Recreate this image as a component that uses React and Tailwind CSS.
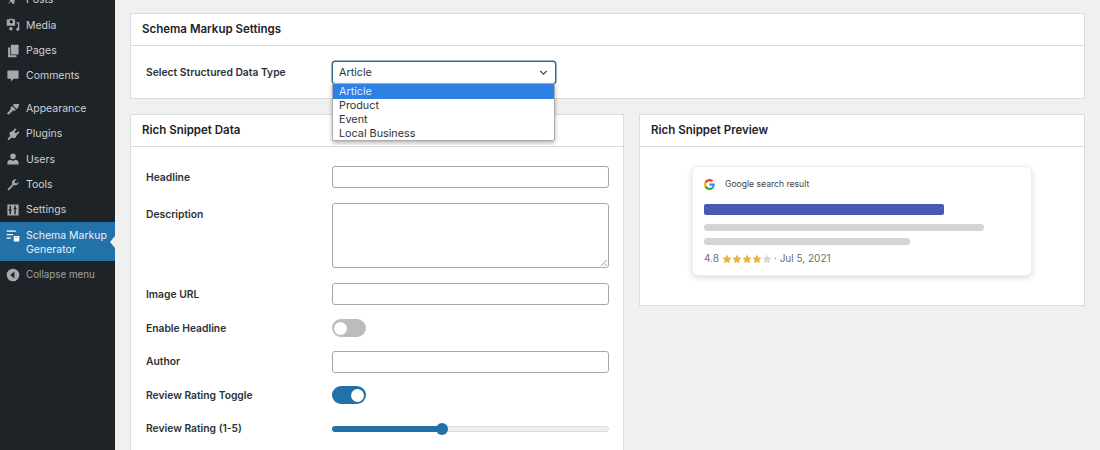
import React from "react";

const ic = "w-[14px] h-[14px] shrink-0 fill-[#a7aaad]";
const icons = {
  Posts: <svg viewBox="0 0 20 20" className={ic}><path d="M12 2l6 6-2 1-1-1-3 3 0 4-2 1-3-4-5 5 4-6-3-3 1-2 4 0 3-3-1-1z" /></svg>,
  Media: <svg viewBox="0 0 20 20" className={ic}><path d="M1 2h3l1-1h5l1 1h2v9H1zm4 3.500a2.500 2.500 0 1 0 5 0 2.500 2.500 0 0 0-5 0zM15 6h4v10a2.200 2.200 0 1 1-2-2V8h-2zM7 13a2.500 2.500 0 1 1 0 5 2.500 2.500 0 0 1 0-5z" fillRule="evenodd" /></svg>,
  Pages: <svg viewBox="0 0 20 20" className={ic}><path d="M7 1h11v14H7zM3 5h3v11h9v3H3z" /></svg>,
  Comments: <svg viewBox="0 0 20 20" className={ic}><path d="M3 2h14a1 1 0 0 1 1 1v10a1 1 0 0 1-1 1h-6l-4 4v-4H3a1 1 0 0 1-1-1V3a1 1 0 0 1 1-1z" /></svg>,
  Appearance: <svg viewBox="0 0 20 20" className={ic}><path d="M19 3l-2 6-2 1-5-5 1-2zM9 6l5 5-2 2-2-1-6 6-3-1 6-7-1-2z" /></svg>,
  Plugins: <svg viewBox="0 0 20 20" className={ic}><path d="M13 2l2 1-3 4 2 2 4-3 1 2-4 4-1 3-3 1-3-1-4 4-2-2 4-4-1-3 1-3 3-1z" /></svg>,
  Users: <svg viewBox="0 0 20 20" className={ic}><path d="M10 2a4 4 0 1 1 0 8 4 4 0 0 1 0-8zM2 18v-3c0-3 3-4 5-4l3 2 3-2c2 0 5 1 5 4v3z" /></svg>,
  Tools: <svg viewBox="0 0 20 20" className={ic}><path d="M18 5a5 5 0 0 1-7 5l-7 8-2-2 7-7a5 5 0 0 1 6-7l-3 3 1 2 2 1z" /></svg>,
  Settings: <svg viewBox="0 0 20 20" className={ic}><path d="M2 2h16v16H2zm3 2v5H4v2h1v5h2v-5h1V9H7V4zm7 0v3h-1v2h1v7h2V9h1V7h-1V4z" fillRule="evenodd" /></svg>,
  Schema: <svg viewBox="0 0 20 20" className="w-[14px] h-[14px] shrink-0 fill-white"><path d="M1 2h13v2H1zM1 7h9v2H1zM1 12h6v2H1zM11 10h8v8h-8zm2 2v1h4v-1z" fillRule="evenodd" /></svg>,
};

function Item({ name }) {
  return (
    <div className="h-[25.3px] flex items-center gap-[6px] pl-[6px] text-[10.500px] text-[#cfd2d4]">
      {icons[name]}
      <span>{name}</span>
    </div>
  );
}

function Sidebar() {
  return (
    <aside className="w-[115px] shrink-0 h-[450px] bg-[#1d2327] overflow-hidden">
      <div className="-mt-[12.500px] flex flex-col">
        <Item name="Posts" />
        <Item name="Media" />
        <Item name="Pages" />
        <Item name="Comments" />
        <div className="h-[7.500px]" />
        <Item name="Appearance" />
        <Item name="Plugins" />
        <Item name="Users" />
        <Item name="Tools" />
        <Item name="Settings" />
        <div className="relative -mt-[0.500px] h-[39px] bg-[#2271a8] flex gap-[6px] pl-[6px] pt-[7px] text-[10.500px] leading-[14px] text-[#e8f2f8]">
          {icons.Schema}
          <span className="whitespace-nowrap">Schema Markup<br />Generator</span>
          <div className="absolute right-0 top-[14px] w-0 h-0 border-y-[6px] border-y-transparent border-r-[5px] border-r-[#f0f0f1]" />
        </div>
        <div className="h-[28px] flex items-center gap-[6px] pl-[6px] text-[9.800px] text-[#a0a3a6]">
          <svg viewBox="0 0 20 20" className={ic}><path d="M10 1a9 9 0 1 1 0 18 9 9 0 0 1 0-18zm2 4l-6 5 6 5z" fillRule="evenodd" /></svg>
          <span>Collapse menu</span>
        </div>
      </div>
    </aside>
  );
}

function Card({ title, className = "", children }) {
  return (
    <section className={`bg-white border border-[#dcdcde] ${className}`}>
      <h2 className="h-[32px] flex items-center px-[11px] border-b border-[#dcdcde] text-[11.500px] font-semibold text-[#1d2327]">{title}</h2>
      {children}
    </section>
  );
}

function Row({ label, children, h, mb, top = false, lift = 1 }) {
  return (
    <div className={`flex pl-[15px] ${top ? "items-start" : "items-center"}`} style={{ height: h, marginBottom: mb }}>
      <label className="w-[186px] shrink-0 text-[10.300px] font-semibold text-[#2c3338]" style={{ paddingTop: top ? 4 : lift }}>{label}</label>
      {children}
    </div>
  );
}

const inputCls = "w-[277px] h-full bg-white border border-[#a4a6a8] rounded-[3px] block";

function Toggle({ on }) {
  return (
    <div className={`w-[34px] h-[18px] rounded-full flex items-center px-[2px] ${on ? "bg-[#2271a8] justify-end" : "bg-[#bcbcbc] justify-start"}`}>
      <div className="w-[13px] h-[13px] rounded-full bg-white" />
    </div>
  );
}

function Star({ on }) {
  return (
    <svg viewBox="0 0 20 20" className={`w-[10px] h-[10px] ${on ? "fill-[#e9b23c]" : "fill-[#d6d6d6]"}`}>
      <path d="M10 1l2.800 5.800 6.200.9-4.500 4.400 1.100 6.300L10 15.400l-5.600 3 1.100-6.300L1 7.700l6.200-.9z" />
    </svg>
  );
}

export default function App() {
  return (
    <div className="w-[1100px] h-[450px] overflow-hidden flex bg-[#f0f0f1] font-['Inter','Liberation_Sans',sans-serif]">
      <Sidebar />
      <main className="flex-1 min-w-0 pt-[13px] pl-[15px] pr-[15px] flex flex-col gap-[15px]">
        <Card title="Schema Markup Settings" className="h-[86px] shrink-0">
          <div className="flex items-start pl-[15px] pt-[15px]">
            <label className="w-[186px] shrink-0 text-[10.300px] font-semibold text-[#2c3338] leading-[22px]">Select Structured Data Type</label>
            <div className="relative w-[224px]">
              <div className="h-[23px] border border-[#2b6f8f] shadow-[0_0_0_0.5px_#2b6f8f] rounded-[3px] bg-white flex items-center justify-between pl-[6px] pr-[5px] text-[10.800px] text-[#2c3338]">
                <span className="pt-px">Article</span>
                <svg viewBox="0 0 20 20" className="w-[13px] h-[13px] fill-none stroke-[#3c434a] stroke-2"><path d="M5 7.500l5 5 5-5" /></svg>
              </div>
              <div className="absolute left-0 top-[22px] w-[223px] h-[58px] bg-white border border-[#a9abad] shadow-[0_2px_4px_rgba(0,0,0,0.3)] rounded-b-[2px] text-[10.800px] leading-[14px] text-[#2c3338]">
                <div className="bg-[#2f80e4] text-[#dbeeff] pl-[6px] h-[15px] leading-[15px]">Article</div>
                <div className="pl-[6px]">Product</div>
                <div className="pl-[6px]">Event</div>
                <div className="pl-[6px]">Local Business</div>
              </div>
            </div>
          </div>
        </Card>
        <div className="flex items-start gap-[15px]">
          <Card title="Rich Snippet Data" className="w-[494px] h-[400px] shrink-0">
            <div className="pt-[19px]">
              <Row label="Headline" h={22} mb={15}><div className={inputCls} /></Row>
              <Row label="Description" h={65} mb={15} top>
                <div className={`${inputCls} relative`}>
                  <svg viewBox="0 0 8 8" className="absolute right-px bottom-px w-[7px] h-[7px] stroke-[#8a8a8a] fill-none"><path d="M1 8L8 1M5 8L8 5" /></svg>
                </div>
              </Row>
              <Row label="Image URL" h={22} mb={14}><div className={inputCls} /></Row>
              <Row label="Enable Headline" h={18} mb={14}><Toggle /></Row>
              <Row label="Author" h={22} mb={13} lift={0}><div className={inputCls} /></Row>
              <Row label="Review Rating Toggle" h={18} mb={14}><Toggle on /></Row>
              <Row label="Review Rating (1-5)" h={18} mb={0} lift={4}>
                <div className="relative w-[277px] h-[6px] rounded-full bg-[#eeeeee] border border-[#dddddd] mt-[4px]">
                  <div className="h-[6px] w-[110px] -ml-px -mt-px rounded-full bg-[#2271a8]" />
                  <div className="absolute left-[103px] -top-[4px] w-[12px] h-[12px] rounded-full bg-[#2271a8]" />
                </div>
              </Row>
            </div>
          </Card>
          <Card title="Rich Snippet Preview" className="flex-1 h-[192px]">
            <div className="pt-[19px] pl-[52px]">
              <div className="w-[340px] h-[110px] bg-white rounded-[6px] border border-[#eeeeee] shadow-[0_2px_6px_rgba(0,0,0,0.14)] px-[11px] pt-[9px]">
                <div className="flex items-center gap-[10px] h-[16px] text-[8.600px] text-[#3c434a]">
                  <svg viewBox="0 0 48 48" className="w-[11px] h-[11px]">
                    <path fill="#EA4335" d="M24 9.500c3.500 0 6.700 1.200 9.200 3.600l6.900-6.900C35.900 2.400 30.500 0 24 0 14.600 0 6.500 5.400 2.600 13.200l8 6.200C12.500 13.700 17.800 9.500 24 9.500z" />
                    <path fill="#4285F4" d="M47 24.500c0-1.600-.1-3.100-.4-4.500H24v9h13c-.6 3-2.300 5.500-4.800 7.200l7.700 6C44.400 38 47 31.800 47 24.500z" />
                    <path fill="#FBBC05" d="M10.600 28.600c-.5-1.400-.8-3-.8-4.600s.3-3.200.8-4.600l-8-6.200C.9 16.500 0 20.100 0 24s.9 7.500 2.600 10.800z" />
                    <path fill="#34A853" d="M24 48c6.500 0 11.900-2.100 15.900-5.800l-7.700-6c-2.200 1.400-4.900 2.300-8.200 2.300-6.200 0-11.500-4.200-13.400-9.900l-8 6.200C6.500 42.600 14.600 48 24 48z" />
                  </svg>
                  <span>Google search result</span>
                </div>
                <div className="mt-[12px] w-[240px] h-[11px] rounded-[2px] bg-[#4a5ab3]" />
                <div className="mt-[9px] w-[280px] h-[7px] rounded-full bg-[#d4d4d4]" />
                <div className="mt-[7px] w-[206px] h-[7px] rounded-full bg-[#d4d4d4]" />
                <div className="mt-[6px] flex items-center gap-[3px] text-[10px] text-[#6b6f73]">
                  <span>4.8</span>
                  <span className="flex">
                    <Star on /><Star on /><Star on /><Star on /><Star />
                  </span>
                  <span className="-ml-px">· Jul 5, 2021</span>
                </div>
              </div>
            </div>
          </Card>
        </div>
      </main>
    </div>
  );
}
